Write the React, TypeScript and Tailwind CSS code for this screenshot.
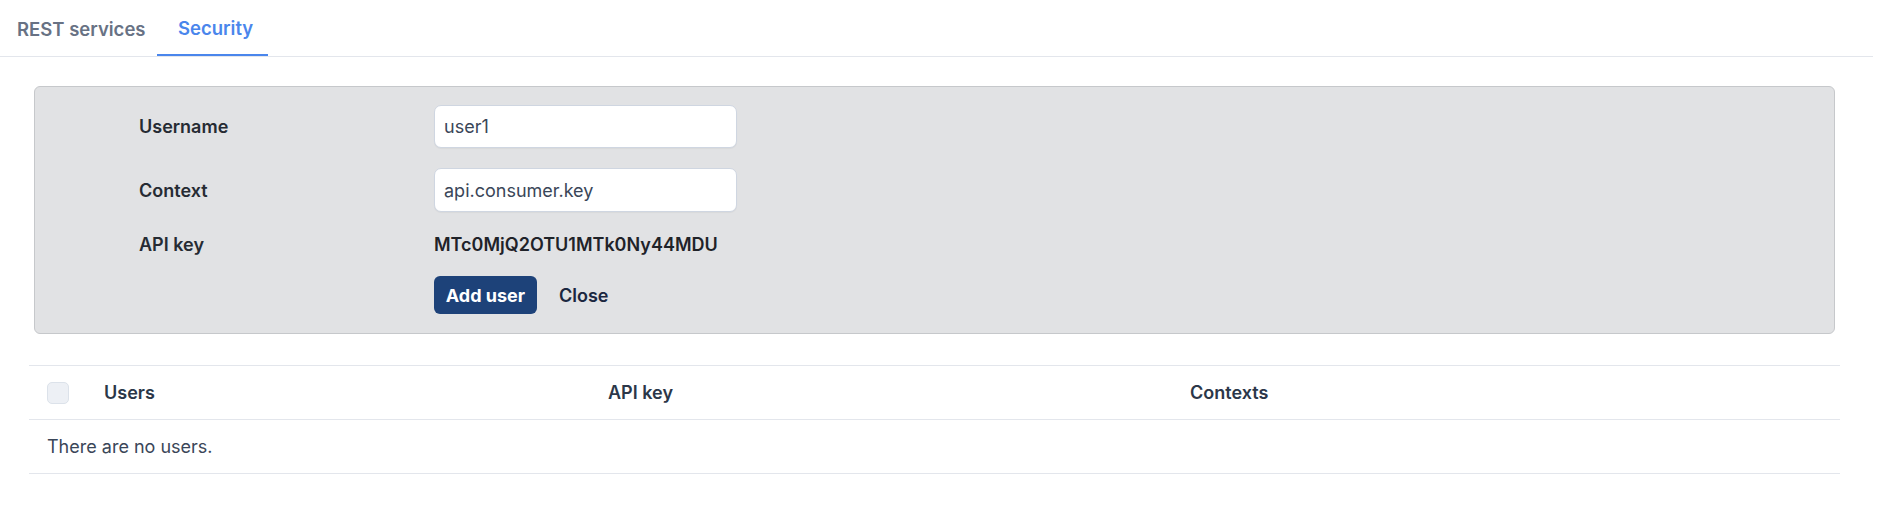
import { useState } from 'react';

type Tab = 'rest' | 'security';

export default function App() {
  const [tab, setTab] = useState<Tab>('security');
  const [username, setUsername] = useState('user1');
  const [context, setContext] = useState('api.consumer.key');
  const [showForm, setShowForm] = useState(true);
  const apiKey = 'MTc0MjQ2OTU1MTk0Ny44MDU';

  return (
    <div className="min-h-screen bg-white font-['Inter',sans-serif] text-[18px]">
      {/* Tabs */}
      <div className="flex h-[57px] border-b border-[#e3e6ec] mr-[9px]">
        <button
          onClick={() => setTab('rest')}
          className={`w-[157px] h-[56px] pt-[4px] pl-[17px] text-left text-[18.5px] font-semibold ${tab === 'rest' ? 'text-[#4a86ec] border-b-2 border-[#4a86ec]' : 'text-[#687284]'}`}
        >
          REST services
        </button>
        <button
          onClick={() => setTab('security')}
          className={`w-[111px] h-[56px] pt-[4px] pl-[21px] text-left text-[18.5px] font-semibold ${tab === 'security' ? 'text-[#4a86ec] border-b-2 border-[#4a86ec]' : 'text-[#687284]'}`}
        >
          Security
        </button>
      </div>

      <div className="px-[29px] pt-[29px] w-[1869px]">
        {/* Formulario de usuario */}
        {showForm && (
          <div className="mx-[5px] rounded-[6px] border border-[#c6c8cb] bg-[#e1e2e4] pt-[18px] pb-[19px] pl-[104px]">
            <div className="grid grid-cols-[295px_303px] gap-y-[20px] items-center">
              <label className="font-semibold text-[#262b33]">Username</label>
              <input
                value={username}
                onChange={(e) => setUsername(e.target.value)}
                className="h-[43px] rounded-[7px] border border-[#cfd6e1] bg-white px-[9px] text-[#3a4658] outline-none shadow-[0_1px_1px_rgba(0,0,0,0.04)]"
              />
              <label className="font-semibold text-[#262b33]">Context</label>
              <input
                value={context}
                onChange={(e) => setContext(e.target.value)}
                className="h-[44px] rounded-[7px] border border-[#cfd6e1] bg-white px-[9px] text-[#3a4658] outline-none shadow-[0_1px_1px_rgba(0,0,0,0.04)]"
              />
              <div className="h-[24px] flex items-center font-semibold text-[#262b33]">API key</div>
              <div className="h-[24px] flex items-center font-semibold text-[#1f2329] whitespace-nowrap">{apiKey}</div>
              <div />
              <div className="flex items-center">
                <button className="h-[38px] w-[103px] rounded-[6px] bg-[#1d4279] text-white font-bold">Add user</button>
                <button onClick={() => setShowForm(false)} className="ml-[22px] font-semibold text-[#1b2740]">Close</button>
              </div>
            </div>
          </div>
        )}

        {/* Tabla de usuarios */}
        <div className="mt-[31px] w-[1811px]">
          <div className="flex items-center h-[55px] border-t border-b border-[#e3e6ec]">
            <div className="w-[75px] pl-[18px]">
              <div className="h-[22px] w-[22px] rounded-[5px] border border-[#dce2ea] bg-[#edf0f5]" />
            </div>
            <div className="w-[504px] font-semibold text-[#2b3749]">Users</div>
            <div className="w-[582px] font-semibold text-[#2b3749]">API key</div>
            <div className="font-semibold text-[#2b3749]">Contexts</div>
          </div>
          <div className="flex items-center h-[54px] border-b border-[#e3e6ec] pl-[18px] text-[#3a4658]">
            There are no users.
          </div>
        </div>
      </div>
    </div>
  );
}
